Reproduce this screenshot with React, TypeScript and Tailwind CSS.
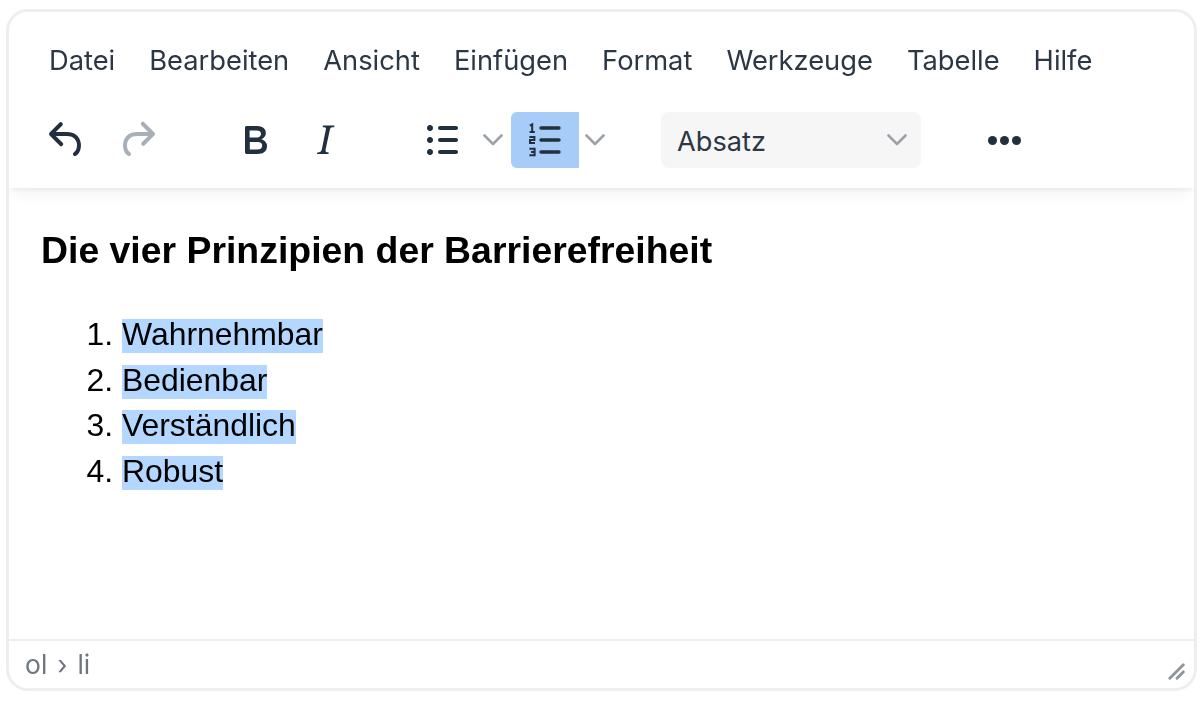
// App.tsx
const menuItems = ['Datei', 'Bearbeiten', 'Ansicht', 'Einfügen', 'Format', 'Werkzeuge', 'Tabelle', 'Hilfe'];
const principles = ['Wahrnehmbar', 'Bedienbar', 'Verständlich', 'Robust'];

function Icon({ d, className }: { d: string; className?: string }) {
  return (
    <svg viewBox="0 0 24 24" className={`w-12 h-12 ${className ?? ''}`} fill="currentColor">
      <path d={d} fillRule="nonzero" />
    </svg>
  );
}

const undoPath = 'M6.4 8H12c3.7 0 6.2 2 6.8 5.1.6 2.7-.4 5.6-2.3 6.8a1 1 0 0 1-1-1.8c1.1-.6 1.8-2.7 1.4-4.6-.5-2.1-2.1-3.5-4.9-3.5H6.4l3.3 3.3a1 1 0 1 1-1.4 1.4l-5-5a1 1 0 0 1 0-1.4l5-5a1 1 0 0 1 1.4 1.4L6.4 8z';
const redoPath = 'M17.6 10H12c-2.8 0-4.4 1.4-4.9 3.5-.4 2 .3 4 1.4 4.6a1 1 0 1 1-1 1.8c-1.9-1.2-2.9-4.1-2.3-6.8C5.8 10 8.3 8 12 8h5.6l-3.3-3.3a1 1 0 1 1 1.4-1.4l5 5a1 1 0 0 1 0 1.4l-5 5a1 1 0 0 1-1.4-1.4l3.3-3.3z';
const boldPath = 'M7.8 19c-.3 0-.5 0-.6-.2l-.2-.5V5.7c0-.2 0-.4.2-.5l.6-.2h5c1.5 0 2.7.3 3.5 1 .7.6 1.1 1.4 1.1 2.5a3 3 0 0 1-.6 1.9c-.4.6-1 1-1.6 1.2.4.1.9.3 1.3.6s.8.7 1 1.2c.4.4.5 1 .5 1.6 0 1.3-.4 2.3-1.3 3-.8.7-2.1 1-3.8 1H7.8zm5-8.3c.6 0 1.2-.1 1.6-.5.4-.3.6-.7.6-1.3 0-1.1-.8-1.7-2.3-1.7H9.3v3.5h3.4zm.5 6c.7 0 1.3-.1 1.7-.4.4-.4.6-.9.6-1.5s-.2-1-.7-1.4c-.4-.3-1-.4-2-.4H9.4v3.8h4z';
const italicPath = 'M16.7 4.7l-.1.9h-.3c-.6 0-1 0-1.4.3-.3.3-.4.6-.5 1.1l-2.1 9.8v.6c0 .5.4.8 1.4.8h.2l-.2.8H8l.2-.8h.2c1.1 0 1.8-.5 2-1.5l2-9.8.1-.5c0-.6-.4-.8-1.4-.8h-.3l.2-.9h5.8z';
const bulletPath = 'M11 5h8c.6 0 1 .4 1 1s-.4 1-1 1h-8a1 1 0 0 1 0-2zm0 6h8c.6 0 1 .4 1 1s-.4 1-1 1h-8a1 1 0 0 1 0-2zm0 6h8c.6 0 1 .4 1 1s-.4 1-1 1h-8a1 1 0 0 1 0-2zM4.5 6c0-.4.1-.8.4-1 .3-.4.7-.5 1.1-.5.4 0 .8.1 1 .4.4.3.5.7.5 1.1 0 .4-.1.8-.4 1-.3.4-.7.5-1.1.5-.4 0-.8-.1-1-.4-.4-.3-.5-.7-.5-1.1zm0 6c0-.4.1-.8.4-1 .3-.4.7-.5 1.1-.5.4 0 .8.1 1 .4.4.3.5.7.5 1.1 0 .4-.1.8-.4 1-.3.4-.7.5-1.1.5-.4 0-.8-.1-1-.4-.4-.3-.5-.7-.5-1.1zm0 6c0-.4.1-.8.4-1 .3-.4.7-.5 1.1-.5.4 0 .8.1 1 .4.4.3.5.7.5 1.1 0 .4-.1.8-.4 1-.3.4-.7.5-1.1.5-.4 0-.8-.1-1-.4-.4-.3-.5-.7-.5-1.1z';

function NumberedListIcon() {
  return (
    <svg viewBox="0 0 24 24" className="w-12 h-12" fill="none" stroke="currentColor">
      <path d="M10 6h9M10 12h9M10 18h9" strokeWidth="1.7" strokeLinecap="round" />
      {/* tiny 1 2 3 */}
      <path d="M4.4 4.8 5.6 4.2v3.8M4.3 8h2.6" strokeWidth="1" />
      <path d="M4.2 10.5h2.5v1.5H4.5v1.5h2.5" strokeWidth="1" />
      <path d="M4.2 16.4h2.6v3.2H4.2M5 18h1.8" strokeWidth="1" />
    </svg>
  );
}

function Chevron({ className }: { className?: string }) {
  return (
    <svg viewBox="0 0 20 12" className={`w-5 h-3 text-[#9ca3a8] ${className ?? ''}`} fill="none" stroke="currentColor">
      <path d="M1.5 1.5 10 10l8.5-8.5" strokeWidth="2.6" strokeLinecap="round" strokeLinejoin="round" />
    </svg>
  );
}

function ToolButton({ children, className }: { children: React.ReactNode; className?: string }) {
  return <div className={`w-[68px] h-14 flex items-center justify-center text-[#222f3e] ${className ?? ''}`}>{children}</div>;
}

export default function App() {
  return (
    <div className="w-[1204px] h-[705px] bg-white pt-[9px] pl-[6px] font-['Inter',sans-serif]">
      <div className="w-[1191px] h-[682px] border-[3px] border-[#eeeeee] rounded-[22px] flex flex-col overflow-hidden bg-white blur-[0.5px]">
        {/* Header */}
        <div className="relative z-10 h-[176px] bg-white shadow-[0_4px_4px_-2px_rgba(34,47,62,0.07),0_12px_14px_-6px_rgba(34,47,62,0.05)]">
          <div className="flex gap-[34px] pl-[40px] pt-[32px] text-[27.3px] leading-[34px] text-[#2b3744]">
            {menuItems.map((item) => (
              <span key={item}>{item}</span>
            ))}
          </div>
          {/* Toolbar */}
          <div className="flex items-center pl-[24px] mt-[34px]">
            <ToolButton><Icon d={undoPath} /></ToolButton>
            <ToolButton className="ml-[2px] text-[#a7b0b8]"><Icon d={redoPath} /></ToolButton>
            <ToolButton className="ml-[50px]"><Icon d={boldPath} /></ToolButton>
            <ToolButton className="ml-[2px]"><Icon d={italicPath} /></ToolButton>
            <ToolButton className="ml-[49px]"><Icon d={bulletPath} /></ToolButton>
            <div className="ml-[3px] w-7 h-14 flex items-center justify-center"><Chevron /></div>
            <ToolButton className="ml-1 bg-[#a6ccf7] rounded-l-md"><NumberedListIcon /></ToolButton>
            <div className="ml-[2px] w-7 h-14 flex items-center justify-center"><Chevron /></div>
            <div className="ml-[52px] w-[260px] h-14 rounded-lg bg-[#f6f6f7] flex items-center justify-between pl-4 pr-[14px] text-[27.2px] text-[#2b3744]">
              <span className="pt-1">Absatz</span>
              <Chevron />
            </div>
            <ToolButton className="ml-[49px]">
              <div className="flex gap-[3px]">
                <span className="w-[9px] h-[9px] rounded-full bg-[#222f3e]" />
                <span className="w-[9px] h-[9px] rounded-full bg-[#222f3e]" />
                <span className="w-[9px] h-[9px] rounded-full bg-[#222f3e]" />
              </div>
            </ToolButton>
          </div>
        </div>

        {/* Content */}
        <div className="flex-1 pl-[32px] pt-[40px] font-['Liberation_Sans',sans-serif] text-black">
          <h1 className="text-[37.4px] leading-[44px] font-bold">Die vier Prinzipien der Barrierefreiheit</h1>
          <ol className="mt-[40px] pl-[81px] list-decimal text-[31.9px] leading-[45.5px]">
            {principles.map((p) => (
              <li key={p}>
                <span className="inline-block h-[34px] leading-[30px] bg-[#b4d7ff]">{p}</span>
              </li>
            ))}
          </ol>
        </div>

        {/* Status bar */}
        <div className="h-[49px] border-t-[2px] border-[#eeeeee] flex items-center justify-between pl-[16px] pr-[8px] text-[26.5px] [word-spacing:2.5px] text-[#6f767e]">
          <span>ol › li</span>
          <svg viewBox="0 0 20 20" className="w-[18px] h-[18px] mt-[12px] text-[#8f959b]" fill="none" stroke="currentColor">
            <path d="M2 18 17 3M10 18l7-7" strokeWidth="3.2" strokeLinecap="round" />
          </svg>
        </div>
      </div>
    </div>
  );
}
